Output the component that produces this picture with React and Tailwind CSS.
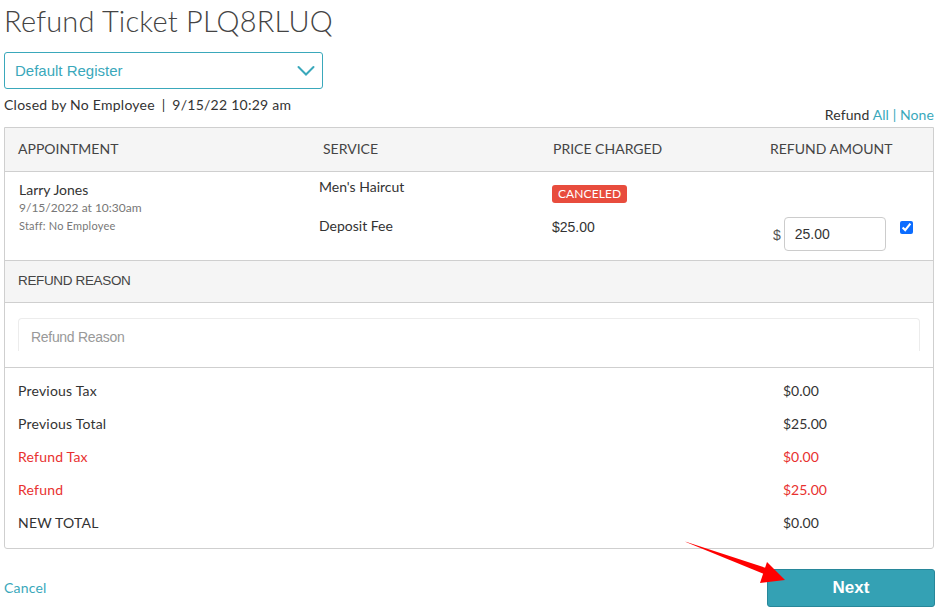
import React from 'react';

const totals = [
  { label: 'Previous Tax', value: '$0.00', red: false },
  { label: 'Previous Total', value: '$25.00', red: false },
  { label: 'Refund Tax', value: '$0.00', red: true },
  { label: 'Refund', value: '$25.00', red: true },
  { label: 'NEW TOTAL', value: '$0.00', red: false },
];

const App = () => {
  return (
    <div className="relative w-[940px] h-[611px] bg-white text-[#333] font-['Lato','Open_Sans',sans-serif] overflow-hidden">
      <div className="pl-1 pr-[6px]">
        <h1 className="text-[29px] font-light leading-none pt-[6px] text-[#444] tracking-[0.2px]">
          Refund Ticket PLQ8RLUQ
        </h1>

        {/* Register select */}
        <div className="mt-[17px] w-[319px] h-[37px] border border-[#3aa8bb] rounded-[3px] flex items-center justify-between pl-[10px] pr-[7px]">
          <span className="text-[15px] text-[#3aa8bb] font-['Liberation_Sans',Arial,sans-serif] mt-[1px]">Default Register</span>
          <svg width="18" height="12" viewBox="0 0 18 12" fill="none">
            <path d="M1.5 2 L9 9.5 L16.5 2" stroke="#3aa8bb" strokeWidth="2" strokeLinecap="round" />
          </svg>
        </div>

        <div className="flex items-start justify-between mt-[9px]">
          <p className="text-[14px] leading-none tracking-[0.25px]">
            Closed by No Employee <span className="px-[3px]">|</span> 9/15/22 10:29 am
          </p>
          <p className="text-[14px] leading-none mt-[10px] tracking-[0.1px]">
            Refund <span className="text-[#3aa8bb]">All</span> <span className="text-[#3aa8bb]">|</span>{' '}
            <span className="text-[#3aa8bb]">None</span>
          </p>
        </div>

        {/* Ticket table */}
        <div className="mt-[5px] border border-[#cfcfcf] rounded-b-[3px]">
          <div className="h-[44px] bg-[#f5f5f5] border-b border-[#cfcfcf] grid grid-cols-[305px_230px_217px_1fr] items-center pl-[13px] pb-[2px] text-[14px] text-[#444] uppercase">
            <span>Appointment</span>
            <span>Service</span>
            <span>Price Charged</span>
            <span>Refund Amount</span>
          </div>

          <div className="h-[88px] grid grid-cols-[300px_233px_217px_1fr] pl-[14px] text-[14px]">
            <div className="pt-[9px]">
              <div className="leading-[17px]">Larry Jones</div>
              <div className="text-[12px] text-[#777] mt-[2px] leading-[16px]">9/15/2022 at 10:30am</div>
              <div className="text-[11px] text-[#777] mt-[2px] leading-[16px] tracking-[0.2px]">Staff: No Employee</div>
            </div>
            <div className="pt-[6px]">
              <div className="leading-[17px]">Men's Haircut</div>
              <div className="leading-[17px] mt-[22px]">Deposit Fee</div>
            </div>
            <div className="pt-[10px]">
              <span className="inline-block bg-[#e84c3d] text-white text-[12px] leading-[18px] px-[6px] rounded-[3px] uppercase tracking-[0.1px]">
                Canceled
              </span>
              <div className="leading-[17px] mt-[16px] font-['Liberation_Sans',Arial,sans-serif]">$25.00</div>
            </div>
            <div className="flex items-start pt-[45px] pl-[4px]">
              <span className="mt-[8px] text-[14px] text-[#555] font-['Liberation_Sans',Arial,sans-serif]">$</span>
              <div className="ml-[3px] w-[102px] h-[34px] border border-[#ccc] rounded-[4px] flex items-center pl-[10px] text-[14px] text-[#333] font-['Liberation_Sans',Arial,sans-serif]">
                25.00
              </div>
              <input type="checkbox" defaultChecked className="ml-[14px] mt-[4px] w-[13px] h-[13px] accent-[#0b6cff]" />
            </div>
          </div>

          <div className="h-[43px] bg-[#f5f5f5] border-y border-[#cfcfcf] flex items-center pl-[13px] text-[13.5px] text-[#444] uppercase font-['Liberation_Sans',sans-serif] tracking-[-0.35px]">
            Refund Reason
          </div>

          <div className="h-[65px] border-b border-[#cfcfcf] px-[13px] pt-[15px]">
            <div className="h-[33px] border border-b-0 border-[#ececec] rounded-t-[4px] pl-[12px] pt-[8px] text-[14px] text-[#999] font-['Liberation_Sans',sans-serif] tracking-[-0.3px]">
              Refund Reason
            </div>
          </div>

          <div className="pt-[6px] pb-[9px] pl-[13px] text-[14px]">
            {totals.map((row) => (
              <div
                key={row.label}
                className={`h-[33px] flex items-center ${row.red ? 'text-[#e8312f]' : 'text-[#333]'}`}
              >
                <span className="w-[765px] tracking-[0.2px]">{row.label}</span>
                <span>{row.value}</span>
              </div>
            ))}
          </div>
        </div>

        <div className="flex items-center justify-between mt-[20px]">
          <a className="text-[14px] text-[#3aa8bb] mt-[-2px] tracking-[0.2px]">Cancel</a>
          <button className="w-[168px] h-[38px] bg-[#34a1b4] border border-[#27879a] rounded-[3px] text-white text-[17px] font-bold font-['Liberation_Sans',Arial,sans-serif] mr-[-1px]">
            Next
          </button>
        </div>
      </div>

      {/* annotation arrow */}
      <svg className="absolute left-[680px] top-[536px]" width="110" height="50" viewBox="0 0 110 50">
        <polygon points="5,5.5 7,6.5 84,38 86,32" fill="#f00" />
        <polygon points="105,44 87,26 80,47" fill="#f00" />
      </svg>
    </div>
  );
};

export default App;
